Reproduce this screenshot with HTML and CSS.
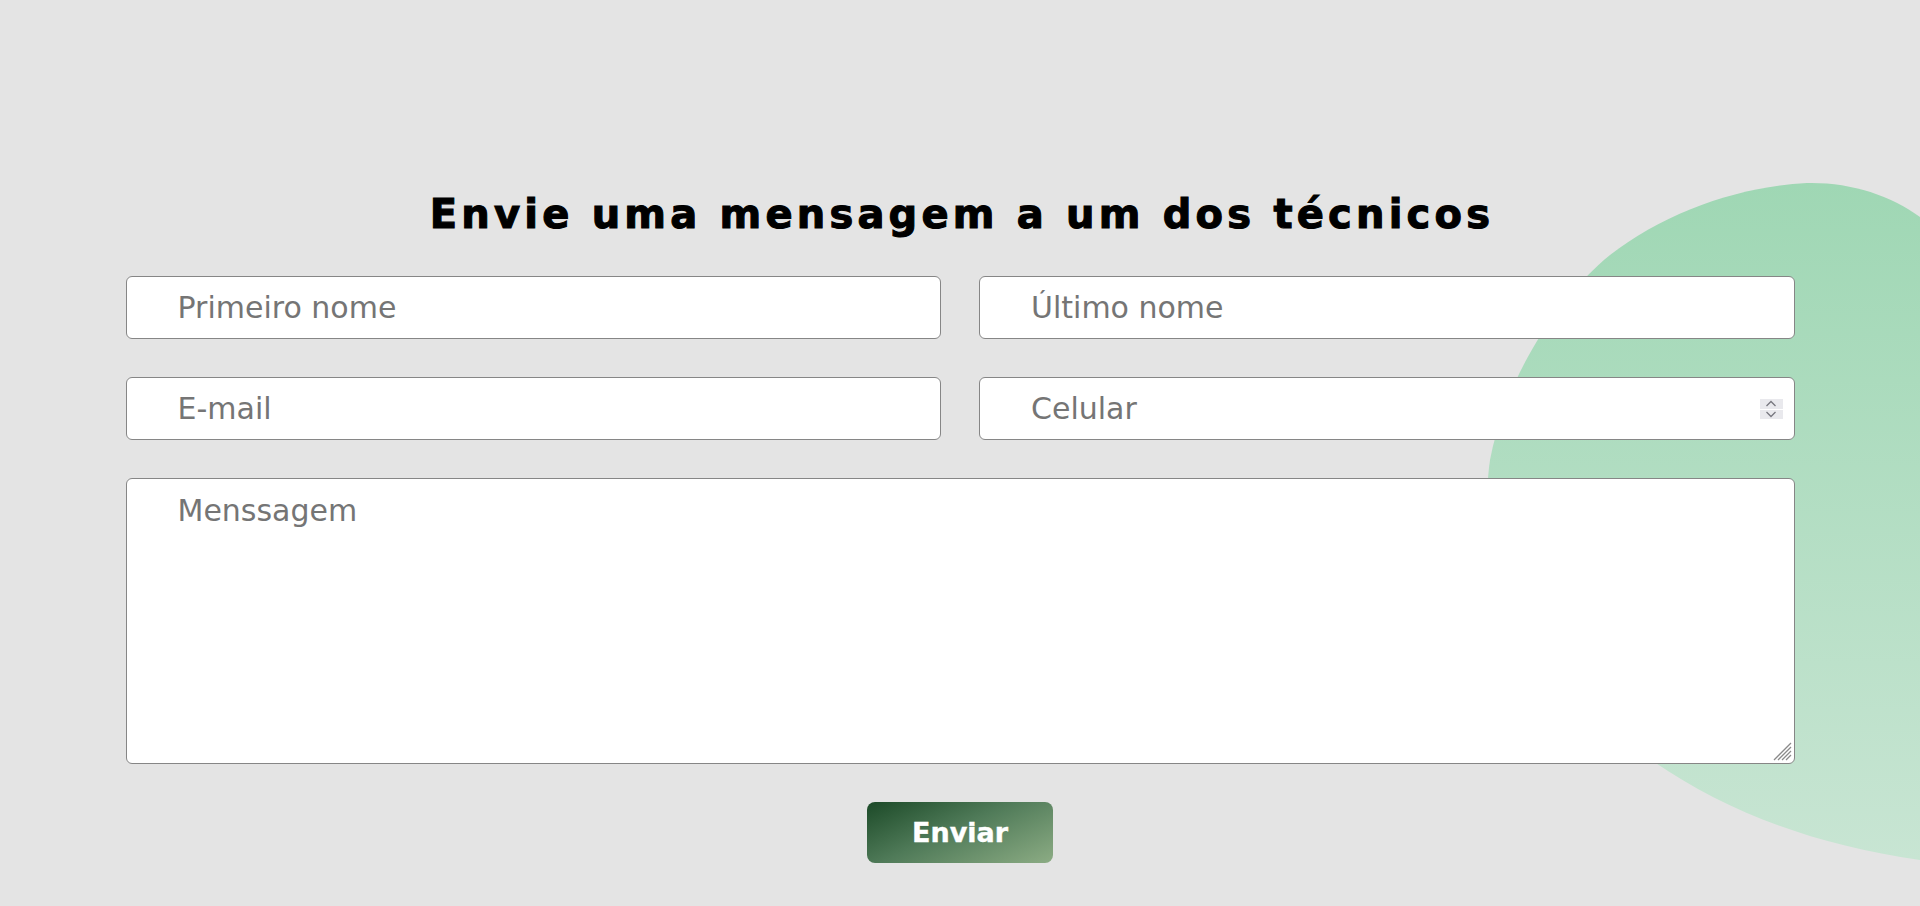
FILE: index.html
```html
<!DOCTYPE html>
<html lang="pt-BR">
<head>
<meta charset="utf-8">
<title>Contato</title>
<link rel="stylesheet" href="styles.css">
</head>
<body>
<div class="page">
  <svg class="blob" viewBox="0 0 1920 906" width="1920" height="906" aria-hidden="true">
    <defs>
      <linearGradient id="bg" x1="0" y1="0" x2="0" y2="1">
        <stop offset="0" stop-color="#9fd7b4"/>
        <stop offset="1" stop-color="#c8e5d3"/>
      </linearGradient>
    </defs>
    <path d="M1920,217 C1890,195 1850,182 1807,183 C1740,186 1665,212 1610,255 C1555,300 1505,380 1490,460 C1478,540 1510,640 1600,720 C1680,790 1780,840 1920,860 Z" fill="url(#bg)"/>
  </svg>
  <section class="contact">
    <h1 class="title">Envie uma mensagem a um dos técnicos</h1>
    <form class="form">
      <input class="field" type="text" placeholder="Primeiro nome">
      <input class="field" type="text" placeholder="Último nome">
      <input class="field" type="email" placeholder="E-mail">
      <div class="wrap">
        <input class="field number" type="number" placeholder="Celular">
        <span class="spin" aria-hidden="true">
          <span class="spin-half"><svg width="12" height="7" viewBox="0 0 12 7"><path d="M1.5 6 L6 1.5 L10.5 6" fill="none" stroke="#77777f" stroke-width="1.3"/></svg></span>
          <span class="spin-half"><svg width="12" height="7" viewBox="0 0 12 7"><path d="M1.5 1 L6 5.5 L10.5 1" fill="none" stroke="#77777f" stroke-width="1.3"/></svg></span>
        </span>
      </div>
      <div class="wrap full">
        <textarea class="field message" placeholder="Menssagem"></textarea>
        <svg class="grip" width="20" height="20" viewBox="0 0 20 20" aria-hidden="true">
          <path d="M2 19 L19 2 M6 19 L19 6 M10 19 L19 10 M14 19 L19 14" stroke="#8a8a8a" stroke-width="1.3" fill="none"/>
        </svg>
      </div>
      <div class="actions"><button class="send" type="button">Enviar</button></div>
    </form>
  </section>
</div>
</body>
</html>
```
FILE: styles.css
```css
html, body {
  margin: 0;
  padding: 0;
}
body {
  background: #e4e4e4;
  font-family: "DejaVu Sans", sans-serif;
  overflow: hidden;
}
.page {
  position: relative;
  width: 1920px;
  height: 906px;
  overflow: hidden;
}
.blob {
  position: absolute;
  top: 0;
  left: 0;
  z-index: 0;
}
.contact {
  position: relative;
  z-index: 1;
  width: 1669px;
  margin: 0 auto;
  padding-top: 190px;
}
.title {
  margin: 0 0 38px;
  text-align: center;
  font-family: "DejaVu Sans", sans-serif;
  font-weight: 700;
  font-size: 40px;
  line-height: 48px;
  letter-spacing: 4.2px;
  text-indent: 4px;
  color: #000;
  -webkit-text-stroke: 1.1px #000;
}
.form {
  display: grid;
  grid-template-columns: 1fr 1fr;
  gap: 38px;
}
.wrap {
  position: relative;
  display: flex;
}
.wrap.full {
  grid-column: 1 / -1;
}
.field {
  box-sizing: border-box;
  width: 100%;
  height: 63px;
  margin: 0;
  padding: 0 10px 0 51px;
  border: 1px solid #868686;
  border-radius: 6px;
  background: #fff;
  font-family: "DejaVu Sans", sans-serif;
  font-size: 30px;
  color: #333;
  outline: none;
}
.field::placeholder {
  color: #757575;
}
.number {
  -moz-appearance: textfield;
}
.number::-webkit-inner-spin-button,
.number::-webkit-outer-spin-button {
  -webkit-appearance: none;
  margin: 0;
}
.spin {
  position: absolute;
  right: 12px;
  top: 22px;
  width: 23px;
  height: 20px;
  display: flex;
  flex-direction: column;
  gap: 1px;
}
.spin-half {
  flex: 1;
  background: #e9e9ed;
  display: flex;
  align-items: center;
  justify-content: center;
}
.spin-half svg {
  display: block;
}
.message {
  height: 286px;
  padding-top: 14px;
  line-height: 35px;
  resize: none;
}
.grip {
  position: absolute;
  right: 3px;
  bottom: 3px;
}
.actions {
  grid-column: 1 / -1;
  display: flex;
  justify-content: center;
}
.send {
  width: 186px;
  height: 61px;
  border: none;
  border-radius: 8px;
  background: linear-gradient(155deg, #1c4a28 0%, #4f7a58 45%, #8cac84 100%);
  color: #fff;
  font-family: "DejaVu Sans", sans-serif;
  font-weight: 700;
  font-size: 27px;
  -webkit-text-stroke: 0.4px #fff;
  cursor: pointer;
}
```
